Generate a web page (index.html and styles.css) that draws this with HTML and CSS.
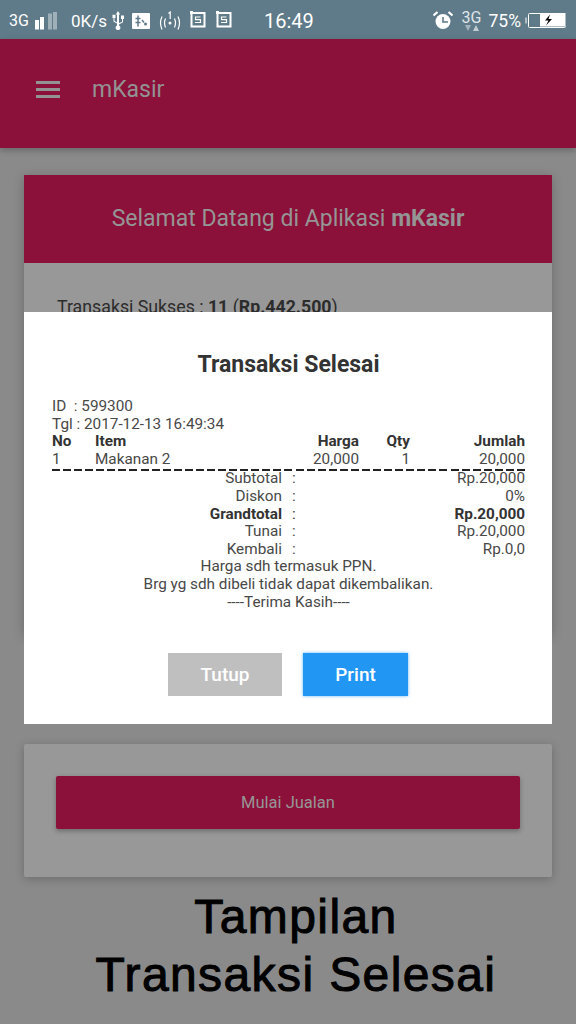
FILE: index.html
```html
<!DOCTYPE html>
<html lang="id">
<head>
<meta charset="utf-8">
<title>mKasir</title>
<link rel="stylesheet" href="styles.css">
</head>
<body>
<div class="screen">
  <div class="statusbar">
    <div class="st-left">
      <span class="st-net">3G</span>
      <svg class="ic-signal" width="22" height="18" viewBox="0 0 22 18"><rect x="0" y="8" width="4" height="9.500" fill="#fff"/><rect x="5" y="5" width="4" height="12.500" fill="#fff"/><rect x="13" y="1.500" width="4" height="16" fill="#9fb0b9"/><rect x="18" y="0" width="4" height="17.500" fill="#9fb0b9"/></svg>
      <span class="st-speed">0K/s</span>
      <svg class="ic-usb" width="12" height="20" viewBox="0 0 12 20"><path d="M6 0l2.200 3.500H7V14.500a2.400 2.400 0 1 1-2 0V12.500L1.500 10.500V7H.5V3.800h3V7h-1v3l2.500 1.300V3.500H3.800z" fill="#fff"/><path d="M7 12.300l3-1.600V8H9V4.500h3V8h-1v3.300L7 13.500z" fill="#fff"/></svg>
      <svg class="ic-box" width="18" height="16" viewBox="0 0 18 16"><rect width="18" height="16" rx="1" fill="#fff"/><path d="M6 2.500v11M3.500 5.500h5M3.500 9.500h5M10 7l2 2.500" stroke="#5f7a88" stroke-width="1.500" fill="none"/><circle cx="13.500" cy="11" r="1.500" fill="#5f7a88"/></svg>
      <svg class="ic-radio" width="22" height="20" viewBox="0 0 22 20"><circle cx="11" cy="12" r="1.500" fill="#fff"/><path d="M6.500 7.500q-2 4.500 0 9M15.500 7.500q2 4.500 0 9M3 5.500q-3 6.500 0 13M19 5.500q3 6.500 0 13" fill="none" stroke="#fff" stroke-width="1.200"/><path d="M9.500 2.500l1.700-1.500v7" fill="none" stroke="#fff" stroke-width="1.200"/></svg>
      <svg class="ic-s" width="16" height="17" viewBox="0 0 16 17"><path d="M1.500 2h13v13.500h-13z" fill="none" stroke="#fff" stroke-width="2"/><path d="M0 0h3v3H0z" fill="#fff"/><path d="M10.500 6H5.500v2.700h5v2.800H5" fill="none" stroke="#fff" stroke-width="1.200"/></svg>
      <svg class="ic-s" width="16" height="17" viewBox="0 0 16 17"><path d="M1.500 2h13v13.500h-13z" fill="none" stroke="#fff" stroke-width="2"/><path d="M0 0h3v3H0z" fill="#fff"/><path d="M10.500 6H5.500v2.700h5v2.800H5" fill="none" stroke="#fff" stroke-width="1.200"/></svg>
    </div>
    <span class="st-time">16:49</span>
    <div class="st-right">
      <svg class="ic-alarm" width="20" height="19" viewBox="0 0 20 19"><circle cx="10" cy="10.500" r="7.500" fill="#fff"/><path d="M10 6V11H15" fill="none" stroke="#5f7a88" stroke-width="1.600"/><path d="M0.500 4.500L4.500 1M19.500 4.500L15.500 1" stroke="#fff" stroke-width="2.200"/></svg>
      <div class="st-3g"><span>3G</span><svg width="14" height="6" viewBox="0 0 14 6"><path d="M0 0h6L3 6z" fill="#a4b4bc"/><path d="M8 6h6l-3-6z" fill="#c3ced3"/></svg></div>
      <span class="st-pct">75%</span>
      <svg class="ic-batt" width="41" height="16" viewBox="0 0 41 16"><path d="M1 4.500v6" stroke="#fff" stroke-width="1"/><path d="M15 .5H4.500q-1 0-1 1v12q0 1 1 1h35q1 0 1-1" fill="none" stroke="#fff" stroke-width="1"/><rect x="15" y="0" width="25.500" height="13.500" fill="#fff"/><path d="M25 1.500L20 7.500h3.500L21 12.500l6-6.500h-3.500z" fill="#000"/></svg>
    </div>
  </div>
  <header class="appbar">
    <div class="burger"><i></i><i></i><i></i></div>
    <span class="appbar-title">mKasir</span>
  </header>
  <main class="content">
    <section class="card card-top">
      <div class="welcome">Selamat Datang di Aplikasi <b>mKasir</b></div>
      <p class="stat">Transaksi Sukses : <b>11</b> (<b>Rp.442.500</b>)</p>
    </section>
    <section class="card card-bottom">
      <div class="start-btn">Mulai Jualan</div>
    </section>
    <div class="caption">Tampilan<br>Transaksi Selesai</div>
  </main>
  <div class="modal">
    <h2 class="modal-title">Transaksi Selesai</h2>
    <div class="receipt">
      <div>ID &nbsp;: 599300</div>
      <div>Tgl : 2017-12-13 16:49:34</div>
      <div class="row items bold"><span>No</span><span>Item</span><span class="r">Harga</span><span class="r">Qty</span><span class="r">Jumlah</span></div>
      <div class="row items"><span>1</span><span>Makanan 2</span><span class="r">20,000</span><span class="r">1</span><span class="r">20,000</span></div>
      <div class="dash"></div>
      <div class="row totals"><span class="r">Subtotal</span><span>:</span><span class="r">Rp.20,000</span></div>
      <div class="row totals"><span class="r">Diskon</span><span>:</span><span class="r">0%</span></div>
      <div class="row totals bold"><span class="r">Grandtotal</span><span class="colon-plain">:</span><span class="r">Rp.20,000</span></div>
      <div class="row totals"><span class="r">Tunai</span><span>:</span><span class="r">Rp.20,000</span></div>
      <div class="row totals"><span class="r">Kembali</span><span>:</span><span class="r">Rp.0,0</span></div>
      <div class="c">Harga sdh termasuk PPN.</div>
      <div class="c">Brg yg sdh dibeli tidak dapat dikembalikan.</div>
      <div class="c">----Terima Kasih----</div>
    </div>
    <div class="actions">
      <div class="btn btn-close">Tutup</div>
      <div class="btn btn-print">Print</div>
    </div>
  </div>
</div>
</body>
</html>
```
FILE: styles.css
```css
* { box-sizing: border-box; }
html, body { margin: 0; padding: 0; }
body { font-family: Roboto, sans-serif; }
.screen { position: relative; width: 576px; height: 1024px; overflow: hidden; background: #8a8a8a; }

.statusbar { height: 39px; background: #5f7a88; color: #fff; display: flex; align-items: center; padding: 2px 0 0 9px; position: relative; }
.st-left { display: flex; align-items: center; }
.st-net { font-size: 16px; width: 26px; }
.ic-signal { margin-right: 14px; }
.st-speed { font-size: 17px; width: 41px; }
.ic-usb { margin-right: 8px; }
.ic-box { margin-right: 9px; }
.ic-radio { margin-right: 9px; }
.ic-s { margin-right: 10px; margin-top: -2px; }
.st-time { position: absolute; left: 264px; top: 9px; font-size: 20px; }
.st-right { margin-left: auto; display: flex; align-items: center; }
.ic-alarm { margin-right: 9px; }
.st-3g { display: flex; flex-direction: column; align-items: center; font-size: 16px; line-height: 15px; color: #dfe5e8; margin-right: 7px; }
.st-pct { font-size: 17.500px; margin-right: 4px; }
.ic-batt { margin-right: 10px; }

.appbar { height: 109px; background: #8c113a; display: flex; align-items: center; padding: 0 36px 8px; box-shadow: 0 3px 6px rgba(0,0,0,.22); color: #939393; position: relative; }
.burger { width: 24px; display: flex; flex-direction: column; gap: 4px; margin-right: 32px; }
.burger i { display: block; height: 3px; background: #939393; }
.appbar-title { font-size: 23px; }

.content { padding: 27px 24px 0; }
.card { background: #989898; box-shadow: 0 2px 10px rgba(0,0,0,.22); }
.card-top { height: 460px; }
.welcome { height: 88px; background: #8c113a; color: #959595; font-size: 23px; line-height: 87px; text-align: center; }
.stat { margin: 34px 0 0 33px; font-size: 17.750px; color: #2c2c2c; }
.card-bottom { margin-top: 109px; height: 133px; padding: 32px; border-radius: 2px; }
.start-btn { height: 53px; background: #8c113a; border-radius: 2px; box-shadow: 0 2px 5px rgba(0,0,0,.3); color: #969696; font-size: 16.500px; display: flex; align-items: center; justify-content: center; }
.caption { margin-top: 11px; text-align: center; font-family: "Liberation Sans", sans-serif; font-size: 48px; line-height: 58px; letter-spacing: 1.400px; color: #000; -webkit-text-stroke: 1px #000; padding-left: 16px; }

.modal { position: absolute; left: 24px; top: 312px; width: 528px; height: 412px; background: #fff; padding: 35px 27px 0 28px; color: #333; }
.modal-title { margin: 0; text-align: center; font-size: 23px; line-height: 35px; font-weight: 700; color: #333; }
.receipt { margin-top: 16px; font-size: 15.300px; line-height: 17.600px; color: #484848; }
.row { display: grid; }
.items { grid-template-columns: 43px 1fr 90px 51px 115px; }
.totals { grid-template-columns: 230px 20px 1fr; }
.bold { font-weight: 700; color: #333; }
.r { text-align: right; }
.c { text-align: center; }
.totals span:nth-child(2) { padding-left: 10px; }
.colon-plain { font-weight: 400; }
.dash { height: 2px; margin-top: 1px; margin-bottom: -1px; background: repeating-linear-gradient(90deg, #222 0 8px, transparent 8px 11.071px); }
.actions { display: flex; justify-content: center; gap: 21px; margin-top: 42px; padding-right: 1px; }
.btn { height: 43px; display: flex; align-items: center; justify-content: center; font-size: 19px; font-weight: 500; color: #fff; }
.btn-close { width: 114px; background: #bfbfbf; }
.btn-print { width: 105px; background: #2196f3; box-shadow: 0 0 3px rgba(33,150,243,.7); }
```
